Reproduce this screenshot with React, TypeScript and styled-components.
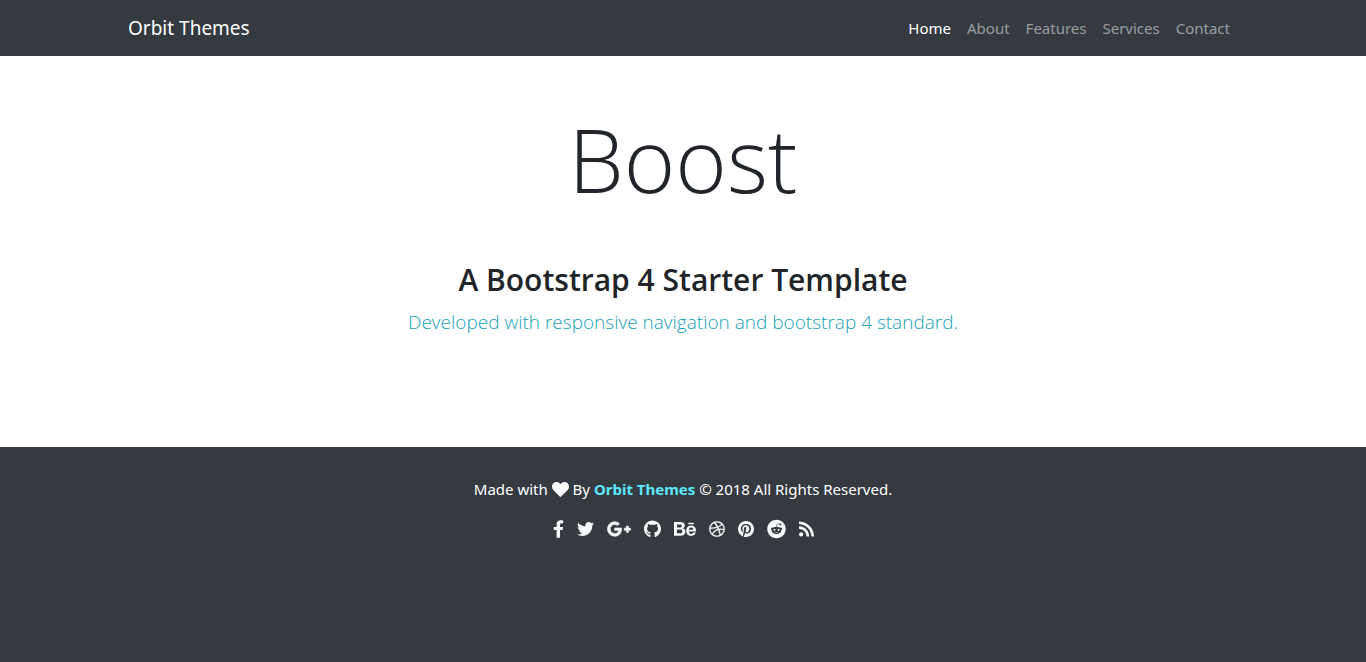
import React from 'react';
import styled, { createGlobalStyle } from 'styled-components';
import {
  FaFacebookF, FaTwitter, FaGooglePlusG, FaGithub, FaBehance,
  FaDribbble, FaPinterest, FaReddit, FaRss, FaHeart,
} from 'react-icons/fa';

const GlobalStyle = createGlobalStyle`
  *, *::before, *::after { box-sizing: border-box; }
  body {
    margin: 0;
    background: #fff;
    color: #212529;
    font-family: "Segoe UI", "Noto Sans", "Open Sans", sans-serif;
    font-size: 15px;
    line-height: 24px;
  }
  a { text-decoration: none; }
`;

const Page = styled.div`
  display: flex;
  flex-direction: column;
  min-height: 100vh;
`;

const Navbar = styled.header`
  background: #343a40;
  padding: 8px 0;
`;

const Container = styled.div`
  display: flex;
  align-items: center;
  justify-content: space-between;
  width: 100%;
  max-width: 1140px;
  margin: 0 auto;
  padding: 0 15px;
`;

const Brand = styled.a`
  color: #fff;
  font-size: 19px;
  line-height: 30px;
`;

const NavList = styled.ul`
  display: flex;
  margin: 0;
  padding: 0;
  list-style: none;
`;

const NavLink = styled.a<{ $active?: boolean }>`
  display: block;
  padding: 8px;
  color: ${({ $active }) => ($active ? '#fff' : 'rgba(255, 255, 255, 0.5)')};
`;

const Hero = styled.main`
  padding: 48px 15px 109px;
  font-family: "Segoe UI", "Open Sans", "Noto Sans", sans-serif;
  text-align: center;
`;

const Title = styled.h1`
  margin: 0 0 48px;
  font-size: 88px;
  font-weight: 300;
  line-height: 110px;
`;

const Subtitle = styled.h2`
  margin: 0 0 8px;
  font-size: 30px;
  font-weight: 600;
  line-height: 36px;
`;

const Lead = styled.p`
  margin: 0;
  color: #17a2b8;
  font-size: 19px;
  font-weight: 300;
  line-height: 32px;
`;

const Footer = styled.footer`
  flex: 1;
  padding: 30px 15px;
  background: #343a40;
  color: #fff;
  text-align: center;
`;

const Credit = styled.p`
  margin: 0 0 16px;
`;

const Heart = styled(FaHeart)`
  width: 17px;
  height: 17px;
  vertical-align: -3px;
`;

const CreditLink = styled.a`
  color: #5ce6fb;
  font-weight: 700;
`;

const Social = styled.ul`
  display: flex;
  justify-content: center;
  gap: 13px;
  margin: 0;
  padding: 0;
  list-style: none;
`;

const SocialLink = styled.a<{ $width: number; $stroke?: number }>`
  display: flex;
  align-items: center;
  width: ${({ $width }) => $width}px;
  height: 24px;
  color: #f8f9fa;

  svg {
    width: 100%;
    height: 20px;
    overflow: visible;
    stroke-width: ${({ $stroke = 0 }) => $stroke};
  }
`;

const navItems = ['Home', 'About', 'Features', 'Services', 'Contact'];

const socialItems = [
  { label: 'Facebook', Icon: FaFacebookF, width: 11 },
  { label: 'Twitter', Icon: FaTwitter, width: 17 },
  { label: 'Google Plus', Icon: FaGooglePlusG, width: 24, stroke: 16 },
  { label: 'GitHub', Icon: FaGithub, width: 17 },
  { label: 'Behance', Icon: FaBehance, width: 22 },
  { label: 'Dribbble', Icon: FaDribbble, width: 16, stroke: 8 },
  { label: 'Pinterest', Icon: FaPinterest, width: 16 },
  { label: 'Reddit', Icon: FaReddit, width: 19 },
  { label: 'RSS', Icon: FaRss, width: 15 },
];

export default function App() {
  return (
    <Page>
      <GlobalStyle />
      <Navbar>
        <Container>
          <Brand href="#">Orbit Themes</Brand>
          <nav>
            <NavList>
              {navItems.map((item, i) => (
                <li key={item}>
                  <NavLink href="#" $active={i === 0}>{item}</NavLink>
                </li>
              ))}
            </NavList>
          </nav>
        </Container>
      </Navbar>
      <Hero>
        <Title>Boost</Title>
        <Subtitle>A Bootstrap 4 Starter Template</Subtitle>
        <Lead>Developed with responsive navigation and bootstrap 4 standard.</Lead>
      </Hero>
      <Footer>
        <Credit>
          Made with <Heart aria-label="love" /> By{' '}
          <CreditLink href="#">Orbit Themes</CreditLink> © 2018 All Rights Reserved.
        </Credit>
        <Social>
          {socialItems.map(({ label, Icon, width, stroke }) => (
            <li key={label}>
              <SocialLink href="#" aria-label={label} $width={width} $stroke={stroke}>
                <Icon />
              </SocialLink>
            </li>
          ))}
        </Social>
      </Footer>
    </Page>
  );
}
